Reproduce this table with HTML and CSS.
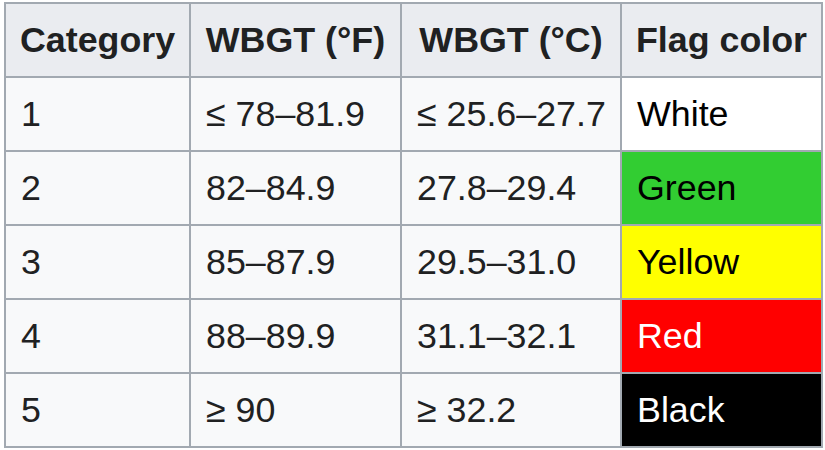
FILE: index.html
```html
<!DOCTYPE html>
<html>
<head>
<meta charset="utf-8">
<link rel="stylesheet" href="styles.css">
</head>
<body>
<table class="wikitable">
  <colgroup>
    <col class="c1"><col class="c2"><col class="c3"><col class="c4">
  </colgroup>
  <thead>
    <tr><th>Category</th><th>WBGT (°F)</th><th>WBGT (°C)</th><th>Flag color</th></tr>
  </thead>
  <tbody>
    <tr><td>1</td><td>≤ 78–81.9</td><td>≤ 25.6–27.7</td><td class="flag-white">White</td></tr>
    <tr><td>2</td><td>82–84.9</td><td>27.8–29.4</td><td class="flag-green">Green</td></tr>
    <tr><td>3</td><td>85–87.9</td><td>29.5–31.0</td><td class="flag-yellow">Yellow</td></tr>
    <tr><td>4</td><td>88–89.9</td><td>31.1–32.1</td><td class="flag-red">Red</td></tr>
    <tr><td>5</td><td>≥ 90</td><td>≥ 32.2</td><td class="flag-black">Black</td></tr>
  </tbody>
</table>
</body>
</html>
```
FILE: styles.css
```css
html, body {
  margin: 0;
  padding: 0;
  background: #ffffff;
}
body {
  padding: 2px 0 0 4px;
  font-family: "Liberation Sans", Arial, sans-serif;
  color: #202122;
}
.wikitable {
  border-collapse: collapse;
  table-layout: fixed;
  width: 819px;
  font-size: 35.8px;
  background: #f8f9fa;
  border: 2px solid #a2a9b1;
}
.c1 { width: 185px; }
.c2 { width: 211px; }
.c3 { width: 220px; }
.c4 { width: 201px; }
.wikitable th,
.wikitable td {
  border: 2px solid #a2a9b1;
  padding: 7px 14px 7px 15px;
  line-height: 58px;
  white-space: nowrap;
}
.wikitable th {
  background: #eaecf0;
  font-weight: bold;
  text-align: center;
  padding-left: 14px;
}
.wikitable td {
  text-align: left;
}
.flag-white { background: #ffffff; color: #000000; }
.flag-green { background: #32cd32; color: #000000; }
.flag-yellow { background: #ffff00; color: #000000; }
.flag-red { background: #ff0000; color: #ffffff; }
.flag-black { background: #000000; color: #ffffff; }
```
